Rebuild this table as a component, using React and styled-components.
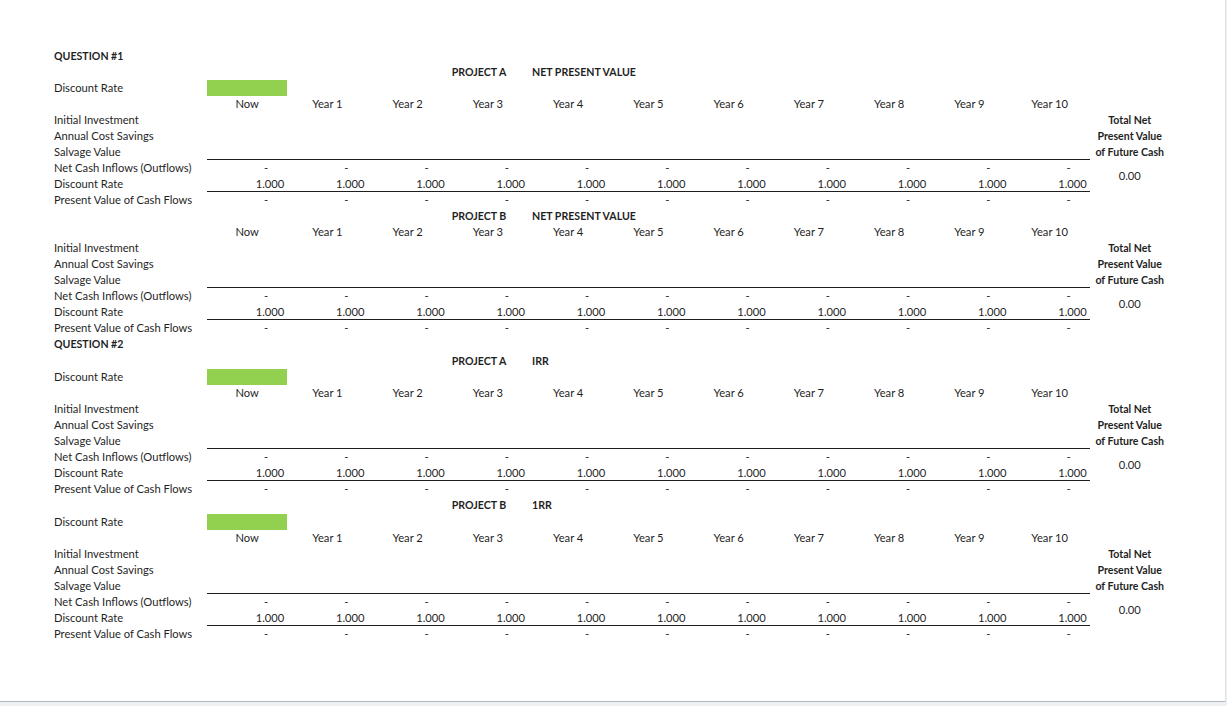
import React from "react"
import styled, { createGlobalStyle } from "styled-components"

const years = ["Now", "Year 1", "Year 2", "Year 3", "Year 4", "Year 5", "Year 6", "Year 7", "Year 8", "Year 9", "Year 10"]

const GlobalStyle = createGlobalStyle`
  body {
    margin: 0;
    background: #eef0f2;
    font-family: Lato, "Open Sans", sans-serif;
    color: #1f1f1f;
  }
`

const Frame = styled.div`
  width: 1226px;
  height: 702px;
  box-sizing: border-box;
  background: #fff;
  border-right: 1px solid #dfe3e8;
  border-bottom: 1px solid #aeb7c2;
  padding: 48px 0 0 54px;
`

const Sheet = styled.div`
  display: grid;
  grid-template-columns: 153px repeat(11, 80.25px) 80px;
  grid-auto-rows: minmax(16px, auto);
`

const Cell = styled.div`
  box-sizing: border-box;
  height: ${p => p.$h || 16}px;
  font-size: ${p => (p.$bold ? 10.6 : 11.2)}px;
  line-height: ${p => p.$h || 16}px;
  white-space: nowrap;
  padding: 0 ${p => (p.$pad != null ? p.$pad : 3)}px 0 ${p => (p.$left != null ? p.$left : 3)}px;
  text-align: ${p => p.$align || "left"};
  font-weight: ${p => (p.$bold ? 700 : 400)};
  border-bottom: ${p => (p.$rule ? "1px solid #1f1f1f" : "none")};
  grid-row: ${p => (p.$span ? `span ${p.$span}` : "auto")};
  align-self: ${p => (p.$span ? "center" : "stretch")};
`

const Label = styled(Cell)`
  padding: 0;
`

const RateInput = styled.div`
  background: #92d050;
`

const Blank = () => <Cell />

const Empty = ({ n }) => Array.from({ length: n }, (_, i) => <Blank key={i} />)

const TitleRow = ({ text, h }) => (
  <>
    <Label $bold $h={h}>{text}</Label>
    <Empty n={12} />
  </>
)

const ProjectRow = ({ project, title, h }) => (
  <>
    <Empty n={4} />
    <Cell $bold $left={4} $h={h}>{project}</Cell>
    <Cell $bold $left={4} $h={h}>{title}</Cell>
    <Empty n={7} />
  </>
)

const RateRow = () => (
  <>
    <Label>Discount Rate</Label>
    <RateInput />
    <Empty n={11} />
  </>
)

const HeaderRow = () => (
  <>
    <Blank />
    {years.map(y => (
      <Cell key={y} $align="center">{y}</Cell>
    ))}
    <Blank />
  </>
)

const InputRow = ({ label, total, rule }) => (
  <>
    <Label>{label}</Label>
    {years.map(y => (
      <Cell key={y} $rule={rule} />
    ))}
    <Cell $bold $align="center">{total}</Cell>
  </>
)

const DashRow = ({ label, children }) => (
  <>
    <Label>{label}</Label>
    {years.map(y => (
      <Cell key={y} $align="right" $pad={19}>-</Cell>
    ))}
    {children}
  </>
)

const FactorRow = () => (
  <>
    <Label>Discount Rate</Label>
    {years.map(y => (
      <Cell key={y} $align="right" $rule>1.000</Cell>
    ))}
  </>
)

const Block = ({ rate }) => (
  <>
    {rate && <RateRow />}
    <HeaderRow />
    <InputRow label="Initial Investment" total="Total Net" />
    <InputRow label="Annual Cost Savings" total="Present Value" />
    <InputRow label="Salvage Value" total="of Future Cash" rule />
    <DashRow label="Net Cash Inflows (Outflows)">
      <Cell $span={2} $align="center">0.00</Cell>
    </DashRow>
    <FactorRow />
    <DashRow label="Present Value of Cash Flows">
      <Blank />
    </DashRow>
  </>
)

export default function App() {
  return (
    <>
      <GlobalStyle />
      <Frame>
        <Sheet>
          <TitleRow text="QUESTION #1" />
          <ProjectRow project="PROJECT A" title="NET PRESENT VALUE" />
          <Block rate />
          <ProjectRow project="PROJECT B" title="NET PRESENT VALUE" />
          <Block />
          <TitleRow text="QUESTION #2" h={17} />
          <ProjectRow project="PROJECT A" title="IRR" />
          <Block rate />
          <ProjectRow project="PROJECT B" title="1RR" h={17} />
          <Block rate />
        </Sheet>
      </Frame>
    </>
  )
}
